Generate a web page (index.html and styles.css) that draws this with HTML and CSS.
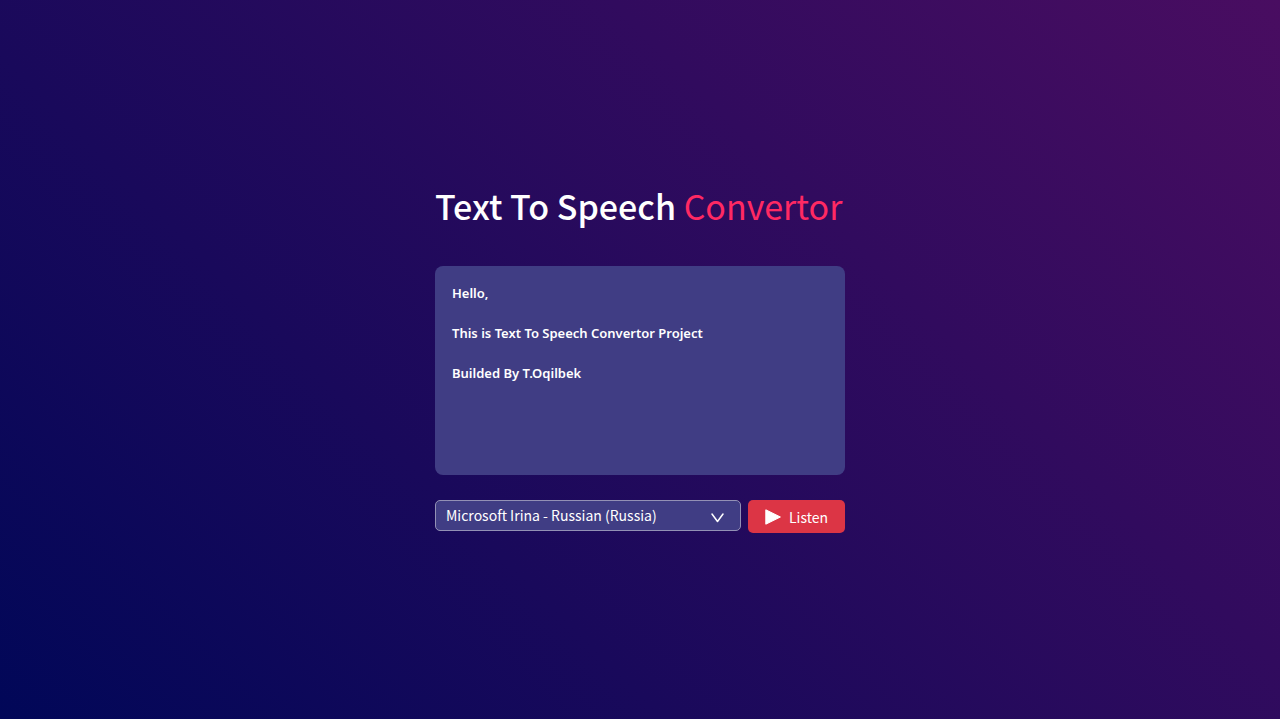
FILE: index.html
```html
<!DOCTYPE html>
<html lang="en">
<head>
<meta charset="utf-8">
<meta name="viewport" content="width=device-width, initial-scale=1">
<title>Text To Speech Convertor</title>
<link rel="stylesheet" href="styles.css">
</head>
<body>
<main class="hero">
  <h1 class="title">Text To Speech <span class="accent">Convertor</span></h1>
  <textarea class="message" aria-label="Text to speak" spellcheck="false">Hello,

This is Text To Speech Convertor Project

Builded By T.Oqilbek</textarea>
  <div class="controls">
    <div class="picker">
      <select class="voice" aria-label="Voice">
        <option>Microsoft Irina - Russian (Russia)</option>
      </select>
      <svg class="chevron" viewBox="0 0 13 10" aria-hidden="true"><path d="M1 1L6.500 8.500L12 1" fill="none" stroke="#fff" stroke-width="1.500" stroke-linecap="round" stroke-linejoin="round"/></svg>
    </div>
    <button class="listen" type="button">
      <svg class="play" viewBox="0 0 16 16" aria-hidden="true"><path d="M.8.800L15.400 8L.8 15.200Z" fill="#fff" stroke="#fff" stroke-width="1" stroke-linejoin="round"/></svg>
      Listen
    </button>
  </div>
</main>
</body>
</html>
```
FILE: styles.css
```css
* {
  box-sizing: border-box;
  margin: 0;
}

body {
  font-family: "Noto Sans CJK SC", "Noto Sans", sans-serif;
  color: #fff;
}

.hero {
  min-height: 100vh;
  display: grid;
  grid-template-columns: min(410px, 92vw);
  place-content: center;
  background: linear-gradient(45deg, #010758, #490d61);
}

.title {
  margin-bottom: 40px;
  font-size: 34px;
  line-height: 40px;
  font-weight: 500;
  white-space: nowrap;
}

.accent {
  color: #ff2963;
  font-weight: 400;
}

.message {
  display: block;
  width: 100%;
  height: 209px;
  margin-bottom: 25px;
  padding: 17px;
  border: 0;
  border-radius: 8px;
  outline: 0;
  resize: none;
  background: #403d84;
  color: #fff;
  font: 600 13px/20px "Noto Sans", sans-serif;
}

.controls {
  display: flex;
  align-items: flex-start;
  gap: 7px;
}

.picker {
  position: relative;
  flex: 1;
}

.voice {
  display: block;
  width: 100%;
  height: 31px;
  padding: 0 40px 2px 10px;
  appearance: none;
  border: 1px solid #9391b5;
  border-radius: 5px;
  background: #403d84;
  color: #fff;
  font: 14px/20px "Noto Sans CJK SC", "Noto Sans", sans-serif;
}

.chevron {
  position: absolute;
  top: 13px;
  right: 17px;
  width: 13px;
  height: 10px;
  pointer-events: none;
}

.listen {
  display: flex;
  align-items: center;
  justify-content: center;
  gap: 8px;
  height: 33px;
  width: 97px;
  padding: 0;
  border: 0;
  border-radius: 5px;
  background: #dc3545;
  color: #fff;
  font: 14px/20px "Noto Sans CJK SC", "Noto Sans", sans-serif;
}

.play {
  width: 16px;
  height: 16px;
}
```
